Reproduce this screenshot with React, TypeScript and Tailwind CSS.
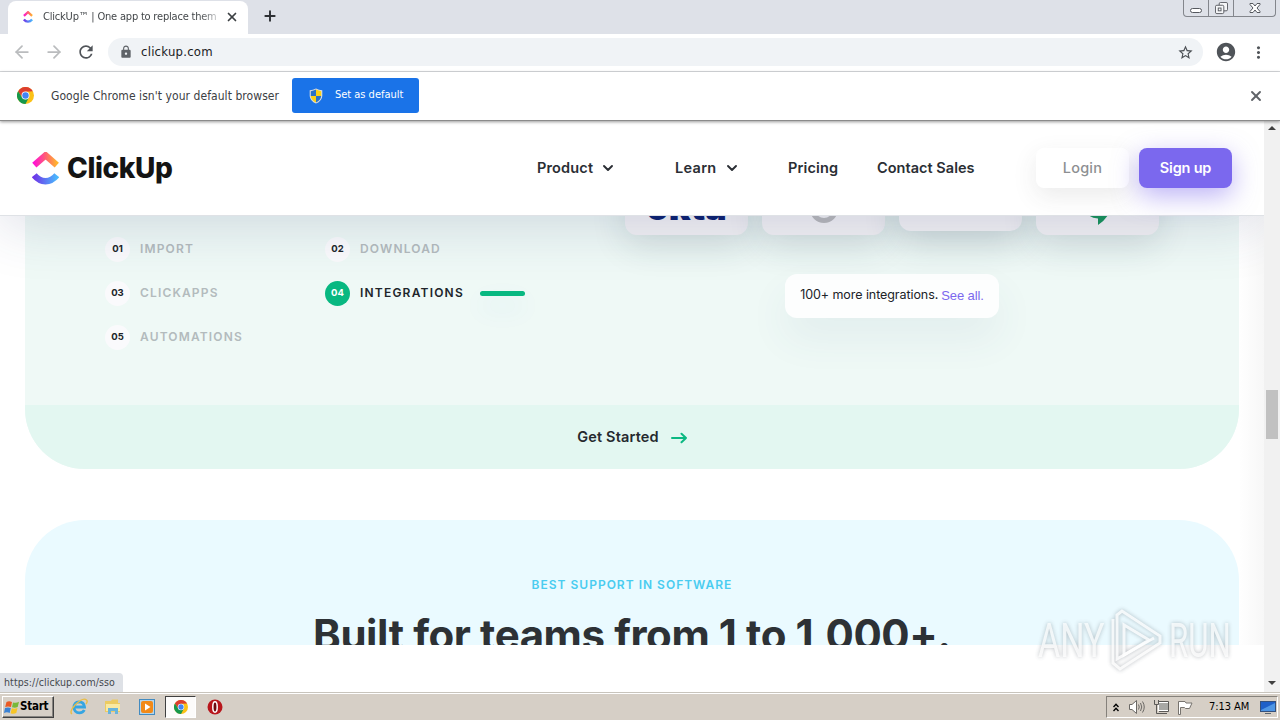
import React from 'react'
import { ArrowLeft, ArrowRight, ChevronDown, X, Plus } from 'lucide-react'
import { MdAccountCircle, MdLock, MdMoreVert, MdRefresh, MdStarBorder } from 'react-icons/md'

const navItems = [
    { name: 'Product', menu: true, className: 'w-[77px] mr-[61px] tracking-[0.15px]' },
    { name: 'Learn', menu: true, className: 'w-[63px] mr-[50px] tracking-[0.3px]' },
    { name: 'Pricing', menu: false, className: 'w-[50px] mr-[39px] tracking-[0.15px]' },
    { name: 'Contact Sales', menu: false, className: 'w-[98px] tracking-[0.03px]' },
]

const features = [
    { number: '01', name: 'IMPORT' },
    { number: '02', name: 'DOWNLOAD' },
    { number: '03', name: 'CLICKAPPS' },
    { number: '04', name: 'INTEGRATIONS', active: true },
    { number: '05', name: 'AUTOMATIONS' },
]

const ChromeLogo = ({ className }: { className: string }) => (
    <svg viewBox="0 0 18 18" className={className}>
        <circle cx="9" cy="9" r="9" fill="#fbc116" />
        <path d="M1.2 4.5A9 9 0 0 1 16.8 4.5L9 4.9L5.5 11Z" fill="#dc3e2f" />
        <path d="M1.2 4.5A9 9 0 0 0 9 18L12.6 11.2L9 13L5.4 11Z" fill="#16984c" />
        <circle cx="9" cy="9" r="4.2" fill="#fff" />
        <circle cx="9" cy="9" r="3.4" fill="#4285f4" />
    </svg>
)

const ClickUpMark = ({ className }: { className: string }) => (
    <svg viewBox="0 0 27 33" className={className}>
        <defs>
            <linearGradient id="roof">
                <stop offset="0" stopColor="#ff12d4" />
                <stop offset="0.5" stopColor="#ff5f72" />
                <stop offset="1" stopColor="#ffb52e" />
            </linearGradient>
            <linearGradient id="smile">
                <stop offset="0" stopColor="#6e37e8" />
                <stop offset="1" stopColor="#4bb8fd" />
            </linearGradient>
        </defs>
        <path d="M2.3 13.2L13.6 3.3L24.8 13.2" fill="none" stroke="url(#roof)" strokeWidth="6.4" />
        <path d="M2.2 23.2Q7 29.2 13.5 29.2Q20 29.2 24.8 23.2" fill="none" stroke="url(#smile)" strokeWidth="6.4" />
    </svg>
)

const Shield = () => (
    <svg viewBox="0 0 14 16" className="h-4 w-3.5">
        <path d="M7 .5Q4 2 .7 2.2V8Q1 13 7 15.6Q13 13 13.3 8V2.2Q10 2 7 .5Z" fill="#d9dde0" />
        <path d="M7 1.6Q4.4 3 1.8 3.2V8H7Z" fill="#2a72c8" />
        <path d="M7 1.6Q9.6 3 12.2 3.2V8H7Z" fill="#fbd116" />
        <path d="M1.8 8Q2.2 12.3 7 14.4V8Z" fill="#fbd116" />
        <path d="M12.2 8Q11.8 12.3 7 14.4V8Z" fill="#2a72c8" />
    </svg>
)

const TitleBar = () => (
    <div className="flex h-[34px] shrink-0 bg-[#dee1e8]">
        <div className="mt-px ml-2 flex h-[33px] w-[240px] items-center rounded-t-lg bg-white pb-px pl-3.5">
            <ClickUpMark className="h-3 w-3" />
            <span className="ml-[9px] w-[174px] overflow-hidden bg-linear-to-r from-[#3c4043] from-90% to-[#c9cacc] bg-clip-text font-['DejaVu_Sans_Condensed','DejaVu_Sans',sans-serif] text-[11px] font-stretch-condensed tracking-[-0.2px] whitespace-nowrap text-transparent">
                ClickUp™ | One app to replace them
            </span>
            <X className="ml-2 h-3.5 w-3.5 text-[#3c4043]" strokeWidth={2.9} />
        </div>
        <Plus className="mt-2 ml-3.5 h-4 w-4 text-[#2d3034]" strokeWidth={2.9} />
        <div className="mr-1 ml-auto flex h-[17px] w-[93px] rounded-b border border-t-0 border-[#83868c]">
            <div className="flex w-[25px] items-end justify-center border-r border-[#83868c] pb-[3px]">
                <div className="h-[5px] w-3 rounded-sm border border-[#55585e] bg-white" />
            </div>
            <div className="flex w-[25px] justify-center border-r border-[#83868c]">
                <svg viewBox="0 0 14 14" className="mt-0.5 h-[13px] w-[13px]" fill="none" stroke="#55585e">
                    <rect x="4.5" y="0.5" width="9" height="9" rx="1.5" fill="#f5f6f8" />
                    <rect x="0.5" y="3.5" width="9" height="9" rx="1.5" fill="#f5f6f8" />
                    <rect x="3.5" y="6.5" width="3" height="3" />
                </svg>
            </div>
            <div className="flex grow items-center justify-center">
                <svg viewBox="0 0 12 10" className="h-2.5 w-3">
                    <path d="M1 .5H4L6 3L8 .5H11V1.5L8 5L11 8.5V9.5H8L6 7L4 9.5H1V8.5L4 5L1 1.5Z" fill="#fff" stroke="#55585e" />
                </svg>
            </div>
        </div>
    </div>
)

const Toolbar = () => (
    <div className="flex h-[38px] shrink-0 items-center border-b border-[#d9dbde] bg-white pb-px">
        <ArrowLeft className="ml-3 h-5 w-5 text-[#babcbe]" strokeWidth={2.1} />
        <ArrowRight className="ml-3 h-5 w-5 text-[#babcbe]" strokeWidth={2.1} />
        <MdRefresh className="ml-3 h-5 w-5 text-[#505459]" />
        <div className="ml-3 flex h-7 w-[1095px] items-center rounded-full bg-[#f0f3f6] pr-[9px] pl-[11px]">
            <MdLock className="h-3.5 w-3.5 text-[#5f6368]" />
            <span className="ml-2 font-['DejaVu_Sans_Condensed','DejaVu_Sans',sans-serif] text-[13px] font-stretch-condensed tracking-[0.23px] text-[#202124]">clickup.com</span>
            <MdStarBorder className="ml-auto h-[17px] w-[17px] text-[#4b4f54]" />
        </div>
        <MdAccountCircle className="ml-3 h-[22px] w-[22px] text-[#505459]" />
        <MdMoreVert className="ml-3 h-[19px] w-[19px] text-[#505459]" />
    </div>
)

const InfoBar = () => (
    <div className="relative z-20 flex h-[49px] shrink-0 items-center border-b border-[#8b8b8b] bg-white pb-px font-['DejaVu_Sans_Condensed','DejaVu_Sans',sans-serif] font-stretch-condensed shadow-[0_1px_3px_rgba(0,0,0,0.4)]">
        <ChromeLogo className="ml-[17px] h-[17px] w-[17px]" />
        <span className="ml-[17px] w-[228px] text-[12px] tracking-[0.06px] whitespace-nowrap text-[#3c4043]">Google Chrome isn't your default browser</span>
        <button className="ml-[13px] flex h-[35px] w-[127px] items-center rounded-[3px] bg-[#1a73e8] pl-[17px] text-[11px] tracking-[-0.02px] whitespace-nowrap text-white">
            <Shield />
            <span className="ml-3">Set as default</span>
        </button>
        <X className="mr-4 ml-auto h-4 w-4 text-[#5f6368]" strokeWidth={2.8} />
    </div>
)

const SiteHeader = () => (
    <header className="relative z-10 flex h-[95px] shrink-0 items-center border-b border-[#dfe2e6] bg-white shadow-[0_10px_55px_rgba(50,60,110,0.17)]">
        <ClickUpMark className="ml-8 h-[33px] w-[27px]" />
        <span className="ml-2 w-[106px] font-[Inter,sans-serif] text-[28px] leading-none font-extrabold tracking-[-0.4px] text-[#141414]">ClickUp</span>
        <nav className="ml-[364px] flex items-center pb-px text-[14.5px] font-semibold text-[#2a2e34]">
            {navItems.map((item) => (
                <a key={item.name} className={`flex items-center justify-between whitespace-nowrap ${item.className}`}>
                    {item.name}
                    {item.menu && <ChevronDown className="-mr-0.5 h-4 w-4 shrink-0" strokeWidth={2.9} />}
                </a>
            ))}
        </nav>
        <button className="ml-[61px] h-10 w-[93px] rounded-lg bg-white pb-px text-[14.5px] font-medium tracking-[0.2px] text-[#8d8f92] shadow-[0_8px_24px_rgba(60,60,60,0.1)]">Login</button>
        <button className="ml-2.5 h-10 w-[93px] rounded-lg bg-[#7b68ee] pb-px text-[14.5px] font-semibold tracking-[-0.2px] text-white shadow-[0_8px_26px_rgba(123,104,238,0.5)]">Sign up</button>
    </header>
)

const Features = () => (
    <section className="mx-[25px] h-[253px] shrink-0 overflow-hidden rounded-b-[60px] bg-[#eff9f6]">
        <div className="flex h-[189px]">
            <div className="ml-20 grid h-[132px] w-[520px] grid-cols-[220px_300px] pt-[11px]">
                {features.map((feature) => (
                    <div key={feature.number} className="flex h-11 items-center">
                        <div className={`flex h-[25px] w-[25px] items-center justify-center rounded-full text-[9.5px] font-bold ${feature.active ? 'bg-[#08b881] text-white' : 'bg-[#fafafc] text-[#202328]'}`}>
                            {feature.number}
                        </div>
                        <span className={`ml-2.5 text-[12px] font-semibold ${feature.active ? 'tracking-[1.2px] text-[#20252a]' : 'tracking-[1.15px] text-[#b3bbbd]'}`}>{feature.name}</span>
                        {feature.active && <div className="ml-4 h-[5px] w-[45px] rounded-sm bg-[#08b881] shadow-[0_12px_24px_rgba(50,120,210,0.12)]" />}
                    </div>
                ))}
            </div>
            <div className="flex w-[534px] flex-col items-center">
                <div className="-mt-10 flex w-full gap-3.5">
                    <div className="flex h-[59px] w-[123px] items-end justify-center rounded-xl bg-[#f2f1f4] pb-2.5 font-[Inter,sans-serif] text-[36px] leading-none font-black text-[#0b2070] shadow-[0_10px_35px_rgba(30,60,70,0.14)]">okta</div>
                    <div className="flex h-[59px] w-[123px] items-end justify-center rounded-xl bg-[#f2f1f4] pb-3 shadow-[0_10px_35px_rgba(30,60,70,0.14)]">
                        <svg viewBox="0 0 28 28" className="h-7 w-7" fill="none" stroke="#b9b9bb">
                            <circle cx="14" cy="14" r="11.5" strokeWidth="5" />
                            <circle cx="14" cy="14" r="4" strokeWidth="3" />
                        </svg>
                    </div>
                    <div className="h-[55px] w-[123px] rounded-xl bg-[#f2f1f4] shadow-[0_10px_35px_rgba(30,60,70,0.2)]" />
                    <div className="flex h-[59px] w-[123px] items-end justify-center rounded-xl bg-[#f2f1f4] pb-2.5 shadow-[0_10px_35px_rgba(30,60,70,0.14)]">
                        <svg viewBox="0 0 30 30" className="h-[30px] w-[30px]">
                            <path d="M15 0A12 12 0 0 0 3 12Q3 23 15 23.5V30Q27 22 27 12A12 12 0 0 0 15 0Z" fill="#17945a" />
                        </svg>
                    </div>
                </div>
                <div className="mt-[39px] flex h-11 w-[214px] items-center justify-center rounded-xl bg-[#fdfefe] pb-px text-[12.5px] tracking-[-0.07px] whitespace-nowrap text-[#202328] shadow-[0_20px_40px_rgba(50,90,130,0.07)]">
                    100+ more integrations.
                    <a className="mt-px ml-[3px] font-['Liberation_Sans',sans-serif] text-[13px] tracking-[-0.1px] text-[#7b68ee]">See all.</a>
                </div>
            </div>
        </div>
        <div className="flex h-16 items-center justify-center bg-[#e3f7f1] text-[14.5px] font-semibold tracking-[0.15px] text-[#25292e]">
            Get Started
            <svg viewBox="0 0 16 12" className="mt-0.5 ml-3 h-3 w-4" fill="none" stroke="#0cb882" strokeWidth="2" strokeLinecap="round" strokeLinejoin="round">
                <path d="M1 6H15M10.5 1.8L15 6L10.5 10.2" />
            </svg>
        </div>
    </section>
)

const Support = () => (
    <section className="mx-[25px] mt-[51px] flex h-[125px] shrink-0 flex-col items-center overflow-hidden rounded-t-[60px] bg-[#eafaff]">
        <p className="mt-[57px] text-[12px] leading-4 font-semibold tracking-[1px] whitespace-nowrap text-[#49ccf0]">BEST SUPPORT IN SOFTWARE</p>
        <h1 className="mt-4 text-[42px] leading-[52px] font-bold tracking-[-0.42px] whitespace-nowrap text-[#2d3135]">Built for teams from 1 to 1,000+.</h1>
    </section>
)

const Scrollbar = () => (
    <div className="flex w-4 shrink-0 flex-col items-center bg-[#f1f1f1]">
        <div className="mt-[5px] border-x-4 border-b-4 border-x-transparent border-b-[#404040]" />
        <div className="mt-[260px] h-[49px] w-3 bg-[#c1c1c1]" />
        <div className="mt-auto mb-[7px] border-x-4 border-t-4 border-x-transparent border-t-[#404040]" />
    </div>
)

const Taskbar = () => (
    <div className="relative flex h-7 shrink-0 items-center border-t border-[#c8c4bc] bg-[#d6cfc6] shadow-[inset_0_1px_0_#fff]">
        <div className="mt-px ml-0.5 flex h-[22px] w-[52px] items-center border border-t-white border-r-[#404040] border-b-[#404040] border-l-white pl-px shadow-[inset_-1px_-1px_0_#878480]">
            <svg viewBox="0 0 16 15" className="h-[15px] w-4">
                <path d="M2.5 2Q5 .5 8 2L7 7Q4 5.8 1.2 7Z" fill="#ea5a25" />
                <path d="M9 2.4Q12 3.4 15 1.8L13.7 7Q11 8.2 8 7.2Z" fill="#78b83a" />
                <path d="M1 8Q4 6.9 6.8 8L5.7 13Q3 11.7 0 13Z" fill="#3b82d4" />
                <path d="M7.8 8.3Q10.6 9.3 13.5 8L12.3 13.1Q9.5 14.5 6.6 13.3Z" fill="#f7c526" />
            </svg>
            <span className="font-['DejaVu_Sans_Condensed','DejaVu_Sans',sans-serif] text-[11.5px] font-bold font-stretch-condensed tracking-[-0.25px] text-black">Start</span>
        </div>
        <svg viewBox="0 0 18 18" className="ml-4 h-[18px] w-[18px]" fill="none">
            <path d="M4 9H14.5Q14 3.8 9 3.8Q4 4 4 9.5Q4.3 14.8 9.3 14.8Q13 14.8 14.3 12" stroke="#35a5e2" strokeWidth="2.8" />
            <path d="M2 16Q-1 14 5 7Q13-1 16.5 2Q18 3.3 16 6" stroke="#e9bd45" strokeWidth="1.4" />
        </svg>
        <svg viewBox="0 0 18 18" className="ml-4 h-[18px] w-[18px]">
            <path d="M1 3H7L8 1.5H14V5H16V14H1Z" fill="#eccb62" />
            <path d="M2 6H16V13H2Z" fill="#f9e9a2" />
            <path d="M4 16V10H14V16H11V13H7V16Z" fill="#68b4dc" />
        </svg>
        <div className="ml-[17px] flex h-4 w-4 items-center justify-center border border-[#438bc0] bg-[#b5d5ea]">
            <svg viewBox="0 0 12 12" className="h-3 w-3">
                <rect width="12" height="12" rx="2" fill="#f28a18" />
                <path d="M4 2.5L9.5 6L4 9.5Z" fill="#fff" />
            </svg>
        </div>
        <div className="mt-px ml-2.5 flex h-[22px] w-[31px] items-center justify-center border border-t-[#404040] border-r-white border-b-white border-l-[#404040] bg-[#fcfbfa]">
            <ChromeLogo className="h-3.5 w-3.5" />
        </div>
        <svg viewBox="0 0 16 16" className="ml-[11px] h-4 w-4">
            <circle cx="8" cy="8" r="7.5" fill="#b8161c" />
            <ellipse cx="8" cy="8" rx="2.2" ry="5.2" fill="#6e0b10" stroke="#fff" strokeWidth="1.5" />
        </svg>
        <div className="mt-px mr-0.5 ml-auto flex h-[22px] w-[172px] items-center border border-t-[#85817b] border-r-white border-b-white border-l-[#85817b]">
            <svg viewBox="0 0 6 9" className="ml-1.5 h-[9px] w-1.5" fill="none" stroke="#000" strokeWidth="1.4">
                <path d="M.5 4L3 1.3L5.5 4M.5 8L3 5.3L5.5 8" />
            </svg>
            <svg viewBox="0 0 16 14" className="ml-2.5 h-3.5 w-4" fill="none" stroke="#6a6865">
                <path d="M.5 4.5H3L7.5 .5V13.5L3 9.5H.5Z" fill="#fff" />
                <path d="M9.5 4.5Q11 7 9.5 9.5M11.5 3Q14 7 11.5 11M13.5 1.5Q17 7 13.5 12.5" />
            </svg>
            <svg viewBox="0 0 16 16" className="ml-2 h-4 w-4" fill="none" stroke="#5b5956">
                <rect x="5.5" y="3.5" width="10" height="8" fill="#a8a8a5" stroke="#fff" />
                <path d="M5 2.5H15.5V12.5H6M8 14.5H14M1.5 1V5.5H5.5V1M3.5 6V14.5H8" />
            </svg>
            <svg viewBox="0 0 16 15" className="ml-2 h-[15px] w-4" stroke="#77736e">
                <path d="M1.5 1.5H8L9 3H15L12.5 8.5H8.5L7.5 7.5H3.5V14.5H1.5Z" fill="#fff" />
            </svg>
            <span className="ml-4 w-[42px] font-['DejaVu_Sans_Condensed','DejaVu_Sans',sans-serif] text-[11px] font-stretch-condensed tracking-[-0.05px] whitespace-nowrap text-black">7:13 AM</span>
            <svg viewBox="0 0 16 13" className="ml-[9px] h-[13px] w-4">
                <rect x=".5" y=".5" width="15" height="10" fill="#1e5fc8" stroke="#34507c" />
                <path d="M1 9L15 2V10H1Z" fill="#4f96e4" />
                <path d="M5 12.5H11" stroke="#5d6670" />
            </svg>
        </div>
    </div>
)

const Watermark = () => (
    <div className="absolute top-[607px] left-[1038px] z-30 flex h-[68px] w-[198px] items-center font-['Liberation_Sans_Narrow','Roboto',sans-serif] text-[48px] leading-none text-white/80 opacity-85 drop-shadow-[0_0_2px_rgba(90,100,110,0.6)]">
        <span className="w-[68px] origin-left scale-x-[0.71]">ANY</span>
        <svg viewBox="0 0 56 64" className="h-16 w-14 shrink-0" fill="none" stroke="#fff" strokeWidth="3" strokeOpacity="0.85">
            <path d="M7 10V54L14 60L54 34V27L16 2L11 6V50L48 29" />
            <path d="M18 16V46L43 31Z" />
        </svg>
        <span className="ml-[7px] w-16 origin-left scale-x-[0.65]">RUN</span>
    </div>
)

const App = () => {
    return (
        <div className="relative flex h-[720px] w-[1280px] flex-col overflow-hidden bg-white font-[Inter,sans-serif]">
            <TitleBar />
            <Toolbar />
            <InfoBar />
            <div className="flex h-[571px] shrink-0">
                <main className="relative flex w-[1264px] flex-col overflow-hidden bg-linear-to-r from-white from-98% to-[#f7f7f7]">
                    <SiteHeader />
                    <Features />
                    <Support />
                    <div className="grow bg-white" />
                    <div className="absolute bottom-0 left-0 flex h-[19px] w-[123px] items-center rounded-tr bg-[#dee1e6] pl-1 font-['DejaVu_Sans_Condensed','DejaVu_Sans',sans-serif] text-[10.5px] font-stretch-condensed tracking-[0.1px] text-[#44484d]">
                        https://clickup.com/sso
                    </div>
                </main>
                <Scrollbar />
            </div>
            <Taskbar />
            <Watermark />
        </div>
    )
}

export default App
